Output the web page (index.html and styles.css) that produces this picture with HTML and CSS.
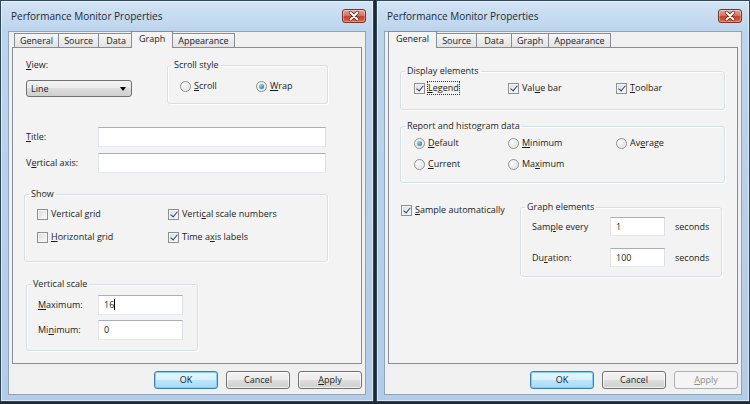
FILE: index.html
```html
<!DOCTYPE html>
<html lang="en">
<head>
    <meta charset="UTF-8">
    <title>Performance Monitor Properties</title>
    <link rel="stylesheet" href="styles.css">
</head>
<body>
    <!-- Graph tab -->
    <div class="window">
        <div class="titlebar">
            <span class="title">Performance Monitor Properties</span>
            <span class="close-btn">
                <svg width="24" height="14" viewBox="0 0 24 14">
                    <path d="M8.5 3.5 L15.5 10.5 M15.5 3.5 L8.5 10.5" stroke="#6b2419" stroke-width="3.4" stroke-linecap="round"/>
                    <path d="M8.5 3.5 L15.5 10.5 M15.5 3.5 L8.5 10.5" stroke="#fff" stroke-width="2" stroke-linecap="round"/>
                </svg>
            </span>
        </div>
        <div class="face">
            <div class="tabs">
                <span class="tab">General</span>
                <span class="tab">Source</span>
                <span class="tab">Data</span>
                <span class="tab active">Graph</span>
                <span class="tab">Appearance</span>
            </div>
            <div class="panel">
                <div class="view-row">
                    <div class="view-col">
                        <div class="label"><u>V</u>iew:</div>
                        <div class="select">Line<span class="arrow"></span></div>
                    </div>
                    <fieldset class="group scroll-style">
                        <legend>Scroll style</legend>
                        <div class="opt-row">
                            <span class="opt opt-scroll"><span class="radio"></span><span><u>S</u>croll</span></span>
                            <span class="opt"><span class="radio on"></span><span><u>W</u>rap</span></span>
                        </div>
                    </fieldset>
                </div>

                <div class="field-row first">
                    <span class="field-label"><u>T</u>itle:</span>
                    <span class="input wide"></span>
                </div>
                <div class="field-row">
                    <span class="field-label">V<u>e</u>rtical axis:</span>
                    <span class="input wide"></span>
                </div>

                <fieldset class="group show">
                    <legend>Show</legend>
                    <div class="check-grid">
                        <span class="opt"><span class="check"></span><span>Vertical <u>g</u>rid</span></span>
                        <span class="opt"><span class="check on"></span><span>Verti<u>c</u>al scale numbers</span></span>
                        <span class="opt"><span class="check"></span><span><u>H</u>orizontal grid</span></span>
                        <span class="opt"><span class="check on"></span><span>Time a<u>x</u>is labels</span></span>
                    </div>
                </fieldset>

                <fieldset class="group vscale">
                    <legend>Vertical scale</legend>
                    <div class="scale-row">
                        <span class="scale-label"><u>M</u>aximum:</span>
                        <span class="input small">16<span class="caret"></span></span>
                    </div>
                    <div class="scale-row">
                        <span class="scale-label">Mi<u>n</u>imum:</span>
                        <span class="input small">0</span>
                    </div>
                </fieldset>
            </div>
            <div class="buttons">
                <span class="btn default">OK</span>
                <span class="btn">Cancel</span>
                <span class="btn"><u>A</u>pply</span>
            </div>
        </div>
    </div>

    <!-- General tab -->
    <div class="window">
        <div class="titlebar">
            <span class="title">Performance Monitor Properties</span>
            <span class="close-btn">
                <svg width="24" height="14" viewBox="0 0 24 14">
                    <path d="M8.5 3.5 L15.5 10.5 M15.5 3.5 L8.5 10.5" stroke="#6b2419" stroke-width="3.4" stroke-linecap="round"/>
                    <path d="M8.5 3.5 L15.5 10.5 M15.5 3.5 L8.5 10.5" stroke="#fff" stroke-width="2" stroke-linecap="round"/>
                </svg>
            </span>
        </div>
        <div class="face">
            <div class="tabs">
                <span class="tab active">General</span>
                <span class="tab">Source</span>
                <span class="tab">Data</span>
                <span class="tab">Graph</span>
                <span class="tab">Appearance</span>
            </div>
            <div class="panel">
                <fieldset class="group display">
                    <legend>Display elements</legend>
                    <div class="opt-row">
                        <span class="opt col-a"><span class="check on"></span><span class="focus"><u>L</u>egend</span></span>
                        <span class="opt col-b"><span class="check on"></span><span>Val<u>u</u>e bar</span></span>
                        <span class="opt"><span class="check on"></span><span><u>T</u>oolbar</span></span>
                    </div>
                </fieldset>

                <fieldset class="group report">
                    <legend>Report and histogram data</legend>
                    <div class="opt-row">
                        <span class="opt col-a"><span class="radio on"></span><span><u>D</u>efault</span></span>
                        <span class="opt col-b"><span class="radio"></span><span><u>M</u>inimum</span></span>
                        <span class="opt"><span class="radio"></span><span>Av<u>e</u>rage</span></span>
                    </div>
                    <div class="opt-row second">
                        <span class="opt col-a"><span class="radio"></span><span><u>C</u>urrent</span></span>
                        <span class="opt col-b"><span class="radio"></span><span>Ma<u>x</u>imum</span></span>
                    </div>
                </fieldset>

                <div class="sample-row">
                    <span class="opt sample-auto"><span class="check on"></span><span><u>S</u>ample automatically</span></span>
                    <fieldset class="group graph-elements">
                        <legend>Graph elements</legend>
                        <div class="interval-row">
                            <span class="interval-label">Sam<u>p</u>le every</span>
                            <span class="input tiny">1</span>
                            <span class="unit">seconds</span>
                        </div>
                        <div class="interval-row">
                            <span class="interval-label">Du<u>r</u>ation:</span>
                            <span class="input tiny">100</span>
                            <span class="unit">seconds</span>
                        </div>
                    </fieldset>
                </div>
            </div>
            <div class="buttons">
                <span class="btn default">OK</span>
                <span class="btn">Cancel</span>
                <span class="btn disabled"><u>A</u>pply</span>
            </div>
        </div>
    </div>
</body>
</html>
```

FILE: styles.css
```css
* {
    box-sizing: border-box;
}

body {
    margin: 0;
    height: 404px;
    overflow: hidden;
    display: flex;
    gap: 2px;
    background-color: #1c2a38;
    font-family: "Open Sans", "Noto Sans", sans-serif;
    font-size: 9px;
    line-height: 12px;
    color: #1b1b1b;
}

u {
    text-decoration-thickness: 1px;
    text-underline-offset: 1px;
}

/* window frame */

.window {
    width: 374px;
    height: 402px;
    display: flex;
    flex-direction: column;
    border: 1px solid #32465a;
    background: linear-gradient(#d2e3f4 0, #bcd4ec 30px, #b3cce7 100%);
    box-shadow: inset 0 0 0 1px rgba(255, 255, 255, 0.5);
}

.titlebar {
    height: 30px;
    display: flex;
    justify-content: space-between;
    align-items: flex-start;
    padding: 8px 7px 0 10px;
}

.title {
    font-size: 10px;
    line-height: 14px;
    color: #1d2935;
}

.close-btn {
    width: 24px;
    height: 14px;
    display: block;
    border: 1px solid #7a3329;
    border-radius: 3px;
    background: linear-gradient(#e9a598 0, #d8735f 45%, #c4412c 55%, #d66a4c 100%);
    box-shadow: inset 0 0 0 1px rgba(255, 255, 255, 0.35);
    overflow: hidden;
}

.close-btn svg {
    display: block;
    margin: -1px;
}

.face {
    margin: 0 7px;
    height: 364px;
    background-color: #f0f0f0;
    border: 1px solid #8fa4b9;
    padding: 0 3px;
}

/* tabs */

.tabs {
    height: 15px;
    display: flex;
    align-items: flex-end;
    padding-left: 2px;
}

.tab {
    height: 14px;
    min-width: 36px;
    padding: 0 5px;
    margin-right: -1px;
    text-align: center;
    line-height: 13px;
    border: 1px solid #898c95;
    border-bottom: none;
    background: linear-gradient(#f6f6f6, #e3e3e3);
}

.tab.active {
    position: relative;
    z-index: 1;
    height: 17px;
    margin: 0 -1px -1px -2px;
    padding: 0 7px;
    line-height: 14px;
    background: #f3f3f3;
}

.panel {
    height: 317px;
    border: 1px solid #898c95;
    background-color: #f3f3f3;
    padding: 0 0 0 11px;
    display: flex;
    flex-direction: column;
    align-items: flex-start;
}

/* group boxes */

.group {
    margin: 0;
    padding: 0;
    min-width: 0;
    border: 1px solid #d5dfe5;
    border-radius: 3px;
    box-shadow: inset 1px 1px 0 #fff, 1px 1px 0 #fff;
}

.group legend {
    margin-left: 4px;
    padding: 0 2px;
    line-height: 12px;
}

.opt-row {
    display: flex;
}

.opt {
    display: flex;
    align-items: center;
    height: 12px;
    white-space: nowrap;
}

.check,
.radio {
    width: 11px;
    height: 11px;
    margin-right: 3px;
    flex: none;
    border: 1px solid #8e8f8f;
    background: linear-gradient(135deg, #dcdcdc, #fbfbfb);
    box-shadow: inset 0 0 0 1px #f4f4f4;
    position: relative;
}

.check.on::after {
    content: "";
    position: absolute;
    left: 3px;
    top: 0;
    width: 3px;
    height: 6px;
    border: solid #2c3f7a;
    border-width: 0 1.5px 1.5px 0;
    transform: rotate(40deg);
}

.radio {
    border-radius: 50%;
    background: radial-gradient(circle at 35% 35%, #fdfdfd, #d4d4d4);
}

.radio.on::after {
    content: "";
    position: absolute;
    left: 2px;
    top: 2px;
    width: 5px;
    height: 5px;
    border-radius: 50%;
    background: radial-gradient(circle at 35% 35%, #8fd2f5, #1d5f93);
}

.focus {
    outline: 1px dotted #333;
    outline-offset: 0;
}

/* inputs */

.input {
    display: block;
    height: 20px;
    padding: 0 5px;
    line-height: 18px;
    background-color: #fff;
    border: 1px solid;
    border-color: #abadb3 #dbdfe6 #e3e9ef #e2e3ea;
}

.input.wide {
    width: 228px;
}

.input.small {
    width: 85px;
}

.input.tiny {
    width: 55px;
    height: 19px;
    line-height: 17px;
}

.caret {
    display: inline-block;
    width: 1px;
    height: 11px;
    vertical-align: -2px;
    background-color: #000;
}

.select {
    width: 106px;
    height: 17px;
    margin-top: 9px;
    padding: 0 4px;
    line-height: 15px;
    display: flex;
    justify-content: space-between;
    align-items: center;
    border: 1px solid #707070;
    border-radius: 3px;
    background: linear-gradient(#f2f2f2 0, #ebebeb 50%, #dddddd 50%, #cfcfcf 100%);
}

.arrow {
    width: 0;
    height: 0;
    margin-right: 1px;
    border-left: 3.5px solid transparent;
    border-right: 3.5px solid transparent;
    border-top: 4px solid #000;
}

/* graph tab */

.view-row {
    display: flex;
    margin: 11px 0 0 2px;
}

.view-col {
    width: 106px;
}

.scroll-style {
    width: 161px;
    height: 45px;
    margin-left: 35px;
}

.scroll-style .opt-row {
    margin: 9px 0 0 12px;
}

.opt-scroll {
    width: 76px;
}

.field-row {
    display: flex;
    align-items: center;
    margin: 6px 0 0 2px;
}

.field-row.first {
    margin-top: 23px;
}

.field-label {
    width: 72px;
}

.show {
    width: 304px;
    height: 74px;
    margin-top: 15px;
}

.check-grid {
    display: grid;
    grid-template-columns: 131px auto;
    row-gap: 11px;
    margin: 8px 0 0 12px;
}

.vscale {
    width: 172px;
    height: 73px;
    margin: 16px 0 0 2px;
}

.scale-row {
    display: flex;
    align-items: center;
    margin: 5px 0 0 11px;
}

.scale-label {
    width: 60px;
}

/* general tab */

.display {
    width: 325px;
    height: 45px;
    margin-top: 17px;
}

.display .opt-row {
    margin: 5px 0 0 13px;
}

.col-a {
    width: 94px;
}

.col-b {
    width: 108px;
}

.report {
    width: 325px;
    height: 63px;
    margin-top: 10px;
}

.report .opt-row {
    margin: 5px 0 0 13px;
}

.report .opt-row.second {
    margin-top: 9px;
}

.sample-row {
    display: flex;
    align-items: flex-start;
    margin-top: 18px;
}

.sample-auto {
    width: 120px;
    padding-left: 1px;
    margin-top: 3px;
}

.graph-elements {
    width: 202px;
    height: 76px;
}

.interval-row {
    display: flex;
    align-items: center;
    margin: 4px 0 0 11px;
}

.interval-row + .interval-row {
    margin-top: 12px;
}

.interval-label {
    width: 78px;
}

.unit {
    margin-left: 10px;
}

/* dialog buttons */

.buttons {
    display: flex;
    justify-content: flex-end;
    gap: 8px;
    margin-top: 7px;
}

.btn {
    width: 64px;
    height: 18px;
    line-height: 16px;
    text-align: center;
    border: 1px solid #707070;
    border-radius: 3px;
    background: linear-gradient(#f2f2f2 0, #ebebeb 50%, #dddddd 50%, #cfcfcf 100%);
    box-shadow: inset 0 0 0 1px rgba(255, 255, 255, 0.7);
}

.btn.default {
    border-color: #3c7fb1;
    background: linear-gradient(#eaf6fd 0, #d9f0fc 50%, #bee6fd 50%, #a7d9f5 100%);
    box-shadow: inset 0 0 0 1px #7fd0f5;
}

.btn.disabled {
    color: #8d8d8d;
    border-color: #adb2b5;
    background: #f4f4f4;
    box-shadow: none;
}
```
